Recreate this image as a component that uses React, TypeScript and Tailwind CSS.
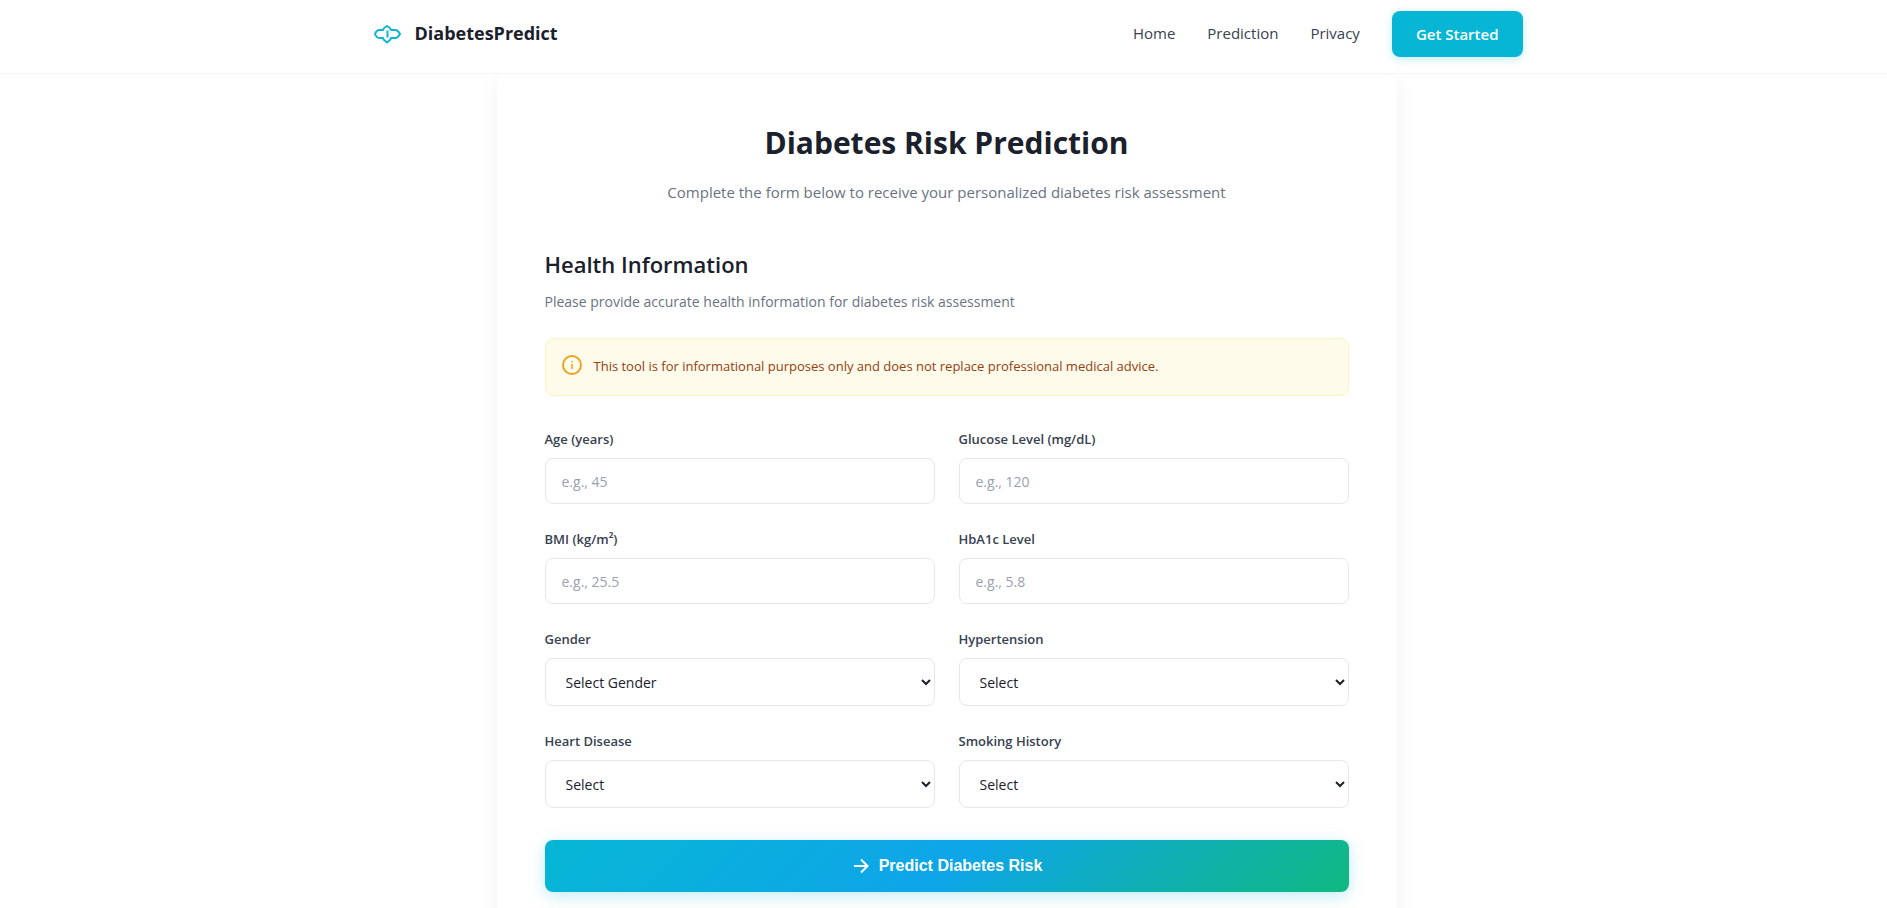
import React, { useId } from "react";

const control =
  "block w-full rounded-lg border border-gray-200 bg-white text-[14px] text-[#1a202c] placeholder:text-gray-400 outline-none focus:border-[#06b6d4]";
const labelText = "mb-2 block text-[13px] leading-[22px] font-semibold text-[#374151]";

function TextField({ label, placeholder }: { label: string; placeholder: string }) {
  const id = useId();
  return (
    <div>
      <label htmlFor={id} className={labelText}>
        {label}
      </label>
      <input id={id} type="text" placeholder={placeholder} className={`${control} h-[46px] px-4`} />
    </div>
  );
}

function SelectField({ label, placeholder, options }: { label: string; placeholder: string; options: string[] }) {
  const id = useId();
  return (
    <div>
      <label htmlFor={id} className={labelText}>
        {label}
      </label>
      <select id={id} defaultValue="" className={`${control} h-12 pl-4`}>
        <option value="">{placeholder}</option>
        {options.map((option) => (
          <option key={option}>{option}</option>
        ))}
      </select>
    </div>
  );
}

function LogoMark() {
  return (
    <svg width="32" height="32" viewBox="0 0 32 32" fill="none" stroke="#06b6d4" strokeWidth="2" aria-hidden="true">
      <path
        d="M4 16 C5 13.5 6.5 12 8.5 12 H12 C12.5 9.5 14 9.5 16 8 C18 9.5 19.5 9.5 20 12 H24.5 C26.5 12 27.5 13.5 29 16 C27.5 18.500 26.500 20 24.500 20 H20 C19.500 22.500 18 22.500 16 24.500 C14 22.500 12.500 22.500 12 20 H8.500 C6.500 20 5 18.500 4 16 Z"
        strokeLinejoin="round"
      />
      <path d="M16.500 12.500v7" />
    </svg>
  );
}

export default function App() {
  return (
    <div className="min-h-screen bg-white pl-1.5 font-['Open_Sans','Noto_Sans',sans-serif] text-[#1a202c]">
      <header className="sticky top-0 z-10 -ml-1.5 border-b border-gray-100 bg-white pl-1.5">
        <div className="mx-auto flex h-[73px] max-w-[1200px] items-center justify-between px-6 pb-1.5">
          <a href="#" className="flex items-center gap-3 text-[18px] font-bold">
            <LogoMark />
            DiabetesPredict
          </a>
          <nav className="flex items-center gap-8 text-[15px] font-medium text-[#374151]">
            <a href="#">Home</a>
            <a href="#">Prediction</a>
            <a href="#">Privacy</a>
            <a
              href="#"
              className="rounded-lg bg-[#06b6d4] px-6 py-3 leading-[22px] font-semibold text-white shadow-[0_2px_8px_rgba(6,182,212,0.25)]"
            >
              Get Started
            </a>
          </nav>
        </div>
      </header>
      <main className="mx-auto max-w-[900px] rounded-t-lg bg-white px-12 pt-12 pb-12 shadow-[0_4px_20px_rgba(0,0,0,0.06)]">
        <h1 className="text-center text-[30px] leading-[42px] font-bold">Diabetes Risk Prediction</h1>
        <p className="mt-4 text-center text-[15px] leading-6 text-gray-500">
          Complete the form below to receive your personalized diabetes risk assessment
        </p>
        <h2 className="mt-11 text-[22px] leading-8 font-semibold">Health Information</h2>
        <p className="mt-2.5 text-[14px] leading-6 text-gray-500">
          Please provide accurate health information for diabetes risk assessment
        </p>
        <div className="mt-6 flex items-start gap-3 rounded-lg border border-[#fef3c7] bg-[#fffbeb] px-4 pt-4 pb-[18px]">
          <svg width="20" height="20" viewBox="0 0 20 20" fill="none" stroke="#f0a020" strokeWidth="2" aria-hidden="true">
            <circle cx="10" cy="10" r="9" />
            <path d="M10 9v5M10 6v1.5" strokeWidth="1.5" />
          </svg>
          <p className="text-[13px] leading-[22px] text-[#92400e]">
            This tool is for informational purposes only and does not replace professional medical advice.
          </p>
        </div>
        <form className="mt-8">
          <div className="grid grid-cols-2 gap-6">
            <TextField label="Age (years)" placeholder="e.g., 45" />
            <TextField label="Glucose Level (mg/dL)" placeholder="e.g., 120" />
            <TextField label="BMI (kg/m²)" placeholder="e.g., 25.5" />
            <TextField label="HbA1c Level" placeholder="e.g., 5.8" />
            <SelectField label="Gender" placeholder="Select Gender" options={["Male", "Female"]} />
            <SelectField label="Hypertension" placeholder="Select" options={["No", "Yes"]} />
            <SelectField label="Heart Disease" placeholder="Select" options={["No", "Yes"]} />
            <SelectField label="Smoking History" placeholder="Select" options={["Never", "Former", "Current"]} />
          </div>
          <button
            type="button"
            className="mt-8 flex h-[52px] w-full items-center justify-center gap-2 rounded-lg bg-[linear-gradient(135deg,#06b6d4_0%,#0ea5e9_50%,#10b981_100%)] font-['Liberation_Sans',sans-serif] text-[16px] font-bold text-white shadow-[0_4px_16px_rgba(6,182,212,0.25)]"
          >
            <svg width="20" height="20" viewBox="0 0 20 20" fill="none" stroke="currentColor" strokeWidth="2" aria-hidden="true">
              <path d="M3 10h13M10 3.500l6.500 6.500-6.500 6.500" />
            </svg>
            Predict Diabetes Risk
          </button>
        </form>
      </main>
    </div>
  );
}
